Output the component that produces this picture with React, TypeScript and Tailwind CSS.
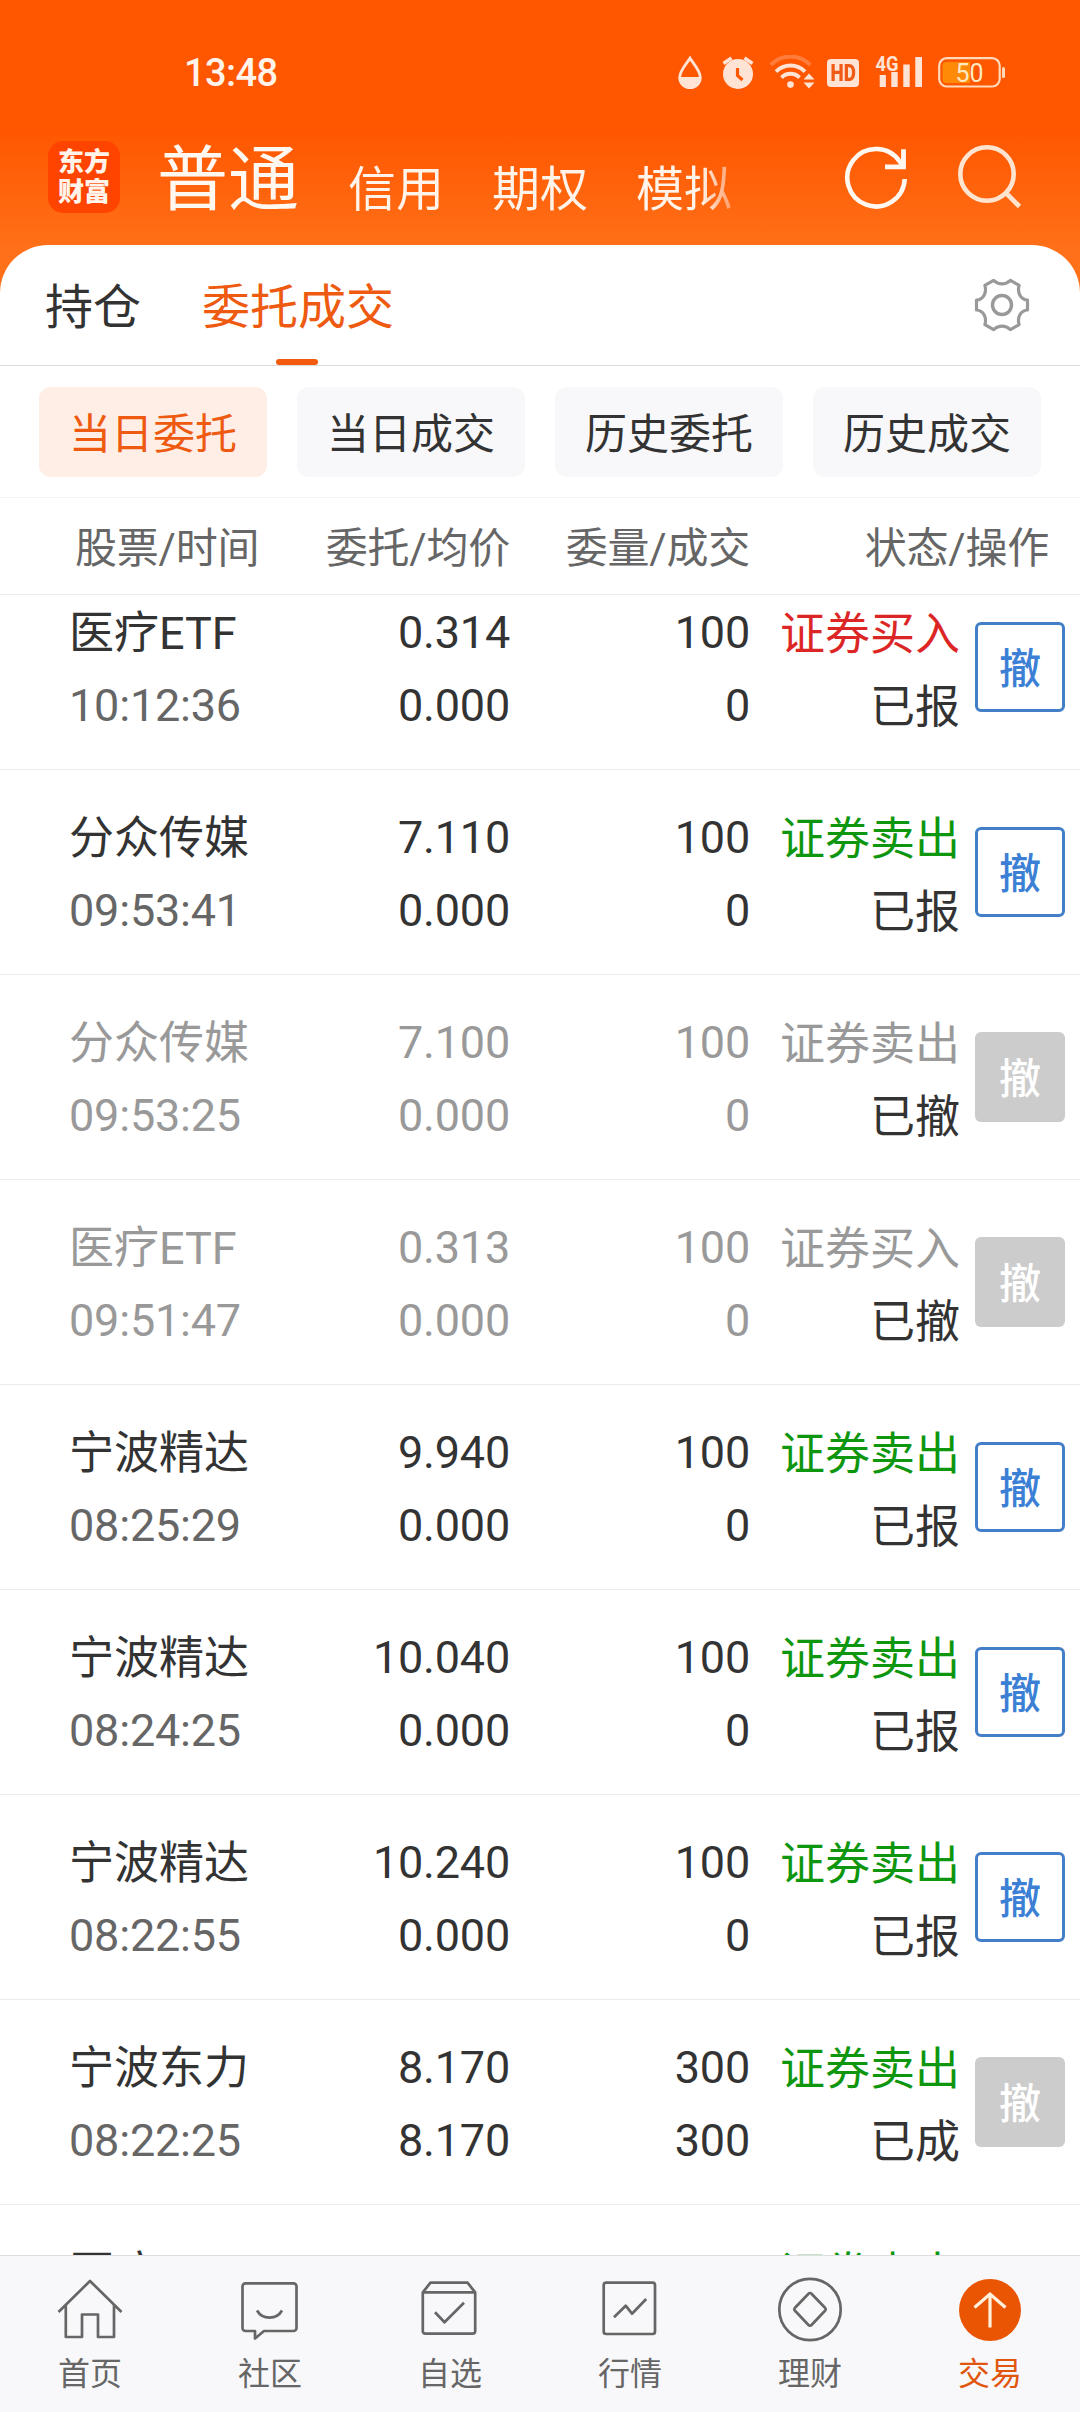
import type { ReactNode } from "react";

type Side = "buy" | "sell";
type Order = {
  name: string;
  time?: string;
  price?: string;
  avg?: string;
  qty?: string;
  filled?: string;
  side: Side;
  status?: string;
};

const orders: Order[] = [
  { name: "医疗ETF", time: "10:12:36", price: "0.314", avg: "0.000", qty: "100", filled: "0", side: "buy", status: "已报" },
  { name: "分众传媒", time: "09:53:41", price: "7.110", avg: "0.000", qty: "100", filled: "0", side: "sell", status: "已报" },
  { name: "分众传媒", time: "09:53:25", price: "7.100", avg: "0.000", qty: "100", filled: "0", side: "sell", status: "已撤" },
  { name: "医疗ETF", time: "09:51:47", price: "0.313", avg: "0.000", qty: "100", filled: "0", side: "buy", status: "已撤" },
  { name: "宁波精达", time: "08:25:29", price: "9.940", avg: "0.000", qty: "100", filled: "0", side: "sell", status: "已报" },
  { name: "宁波精达", time: "08:24:25", price: "10.040", avg: "0.000", qty: "100", filled: "0", side: "sell", status: "已报" },
  { name: "宁波精达", time: "08:22:55", price: "10.240", avg: "0.000", qty: "100", filled: "0", side: "sell", status: "已报" },
  { name: "宁波东力", time: "08:22:25", price: "8.170", avg: "8.170", qty: "300", filled: "300", side: "sell", status: "已成" },
  { name: "医疗", side: "sell" },
];

function StatusBar() {
  return (
    <div className="flex h-[132px] items-start pl-[184px] pr-[74px] pt-[55px]">
      <span className="mt-[-4px] text-[38px] leading-[44px] font-medium tracking-[-0.6px] text-[#fff3ea]">13:48</span>
      <div className="ml-auto flex items-start text-[#ffe4d6]">
        <svg width="24" height="34" viewBox="0 0 24 34" className="mt-px">
          <path d="M12 2.2C9.5 6.5 1.7 14.5 1.7 21.4a10.3 10.3 0 0 0 20.6 0C22.3 14.500 14.500 6.500 12 2.200Z" fill="none" stroke="currentColor" strokeWidth="2.8" />
          <path d="M1.500 21h21a10.500 11.500 0 0 1-21 0Z" fill="currentColor" />
        </svg>
        <svg width="32" height="34" viewBox="0 0 32 34" className="ml-[20px] mt-px">
          <circle cx="16" cy="18" r="15" fill="currentColor" />
          <path d="M1.500 7.500 9.500 2M30.500 7.500 22.500 2" stroke="currentColor" strokeWidth="3.400" />
          <path d="M15.500 12v7.500l5 4.500" fill="none" stroke="#ff5600" strokeWidth="3.200" />
        </svg>
        <svg width="46" height="36" viewBox="0 0 46 36" className="ml-[15px]">
          <g fill="none" stroke="currentColor" strokeWidth="3.900">
            <path d="M1.800 9.900a27.500 27.500 0 0 1 39.400 0" opacity="0.28" />
            <path d="M7 16.700a20.200 20.200 0 0 1 29 0" />
            <path d="M12.500 22.600a12.500 12.500 0 0 1 18 0" />
          </g>
          <circle cx="21.500" cy="29.600" r="3.300" fill="currentColor" />
          <path d="M34.500 24.500 40 18.500l5.500 6ZM34.500 27.500h11l-5.500 6Z" fill="currentColor" />
        </svg>
        <span className="ml-[12px] mt-[4px] flex h-[28px] w-[32px] items-center justify-center rounded-[4px] bg-[#ffe4d6]">
          <span className="scale-x-[0.78] text-[24px] leading-[28px] font-black text-[#f05a14]">HD</span>
        </span>
        <svg width="48" height="34" viewBox="0 0 48 34" className="ml-[16px]">
          <text x="0.500" y="16" fontFamily="Roboto, sans-serif" fontSize="21" fontWeight="700" textLength="23" lengthAdjust="spacingAndGlyphs" fill="currentColor">4G</text>
          <path d="M4.700 20h6.200v12H4.700ZM16.300 17h6.400v15h-6.400ZM28.300 9.500h6.400V32h-6.400ZM40.300 2H47v30h-6.700Z" fill="currentColor" />
        </svg>
        <svg width="68" height="34" viewBox="0 0 68 34" className="ml-[15px]">
          <rect x="1.200" y="3.200" width="60.500" height="28.300" rx="7.500" fill="none" stroke="#ffd9b8" strokeWidth="2.200" />
          <path d="M8.500 7H32v21H8.500a4 4 0 0 1-4-4V11a4 4 0 0 1 4-4Z" fill="#ff8a08" />
          <rect x="64" y="12" width="3" height="11" rx="1.500" fill="#ffd9b8" />
          <text x="17.500" y="26.500" fontFamily="Roboto, sans-serif" fontSize="25" textLength="28" lengthAdjust="spacingAndGlyphs" fill="#ffe9c4">50</text>
        </svg>
      </div>
    </div>
  );
}

function Header() {
  return (
    <div className="flex h-[113px] items-start pl-[48px]">
      <div className="mt-[9px] flex h-[72px] w-[72px] flex-col items-center justify-center rounded-[15px] bg-[#ff4400] text-[26px] leading-[30px] font-black text-[#fff3ea]">
        <span>东方</span>
        <span>财富</span>
      </div>
      <span className="ml-[37px] mt-[8px] w-[142px] text-[71px] leading-[80px] text-[#fff8f0]">普通</span>
      <div className="ml-[49px] mt-[28px] flex gap-[48px] bg-gradient-to-r from-[#fff3ea] from-[92%] to-[#ff9a66] bg-clip-text text-[48px] leading-[60px] text-transparent">
        <span>信用</span>
        <span>期权</span>
        <span>模拟</span>
      </div>
      <svg width="66" height="68" viewBox="0 0 66 68" className="ml-[111px] mt-[12px]" fill="none" stroke="#fff8f0" strokeWidth="4.600">
        <path d="M61.700 35a28.700 28.700 0 1 1-5-17.500L61 23.500" />
        <path d="M60.500 5.300v17.500H42" strokeWidth="4.800" />
      </svg>
      <svg width="66" height="68" viewBox="0 0 66 68" className="ml-[47px] mt-[12px]" fill="none" stroke="#ffe4d0" strokeWidth="4.600">
        <circle cx="31" cy="30" r="26.700" />
        <path d="m50 49 13.500 13.500" />
      </svg>
    </div>
  );
}

function Tabs() {
  return (
    <div className="flex h-[121px] items-start border-b border-[#dcdcdc] pl-[45px] pr-[48px] text-[48px] leading-[60px]">
      <span className="mt-[33px] text-[#333]">持仓</span>
      <div className="relative ml-[61px] h-[120px] pt-[33px] text-[#ee5a10]">
        委托成交
        <span className="absolute bottom-0 left-[74px] h-[6px] w-[42px] rounded-[3px] bg-[#f25b0c]" />
      </div>
      <svg width="60" height="60" viewBox="-30 -30 60 60" className="ml-auto mt-[30px]" fill="none" stroke="#999" strokeWidth="3.200" strokeLinejoin="round">
        <path d="M25.500-5V5C18.500 5.500 15 12.500 17.100 19.600L8.400 24.600C3.500 20-3.500 20-8.400 24.600L-17.100 19.600C-15 12.500-18.500 5.500-25.500 5V-5C-18.500-5.500-15-12.500-17.100-19.600L-8.400-24.600C-3.500-20 3.500-20 8.400-24.600L17.100-19.600C15-12.500 18.500-5.500 25.500-5Z" />
        <circle r="9.500" strokeWidth="3.400" />
      </svg>
    </div>
  );
}

function Chips() {
  const base = "flex h-[90px] w-[228px] items-center justify-center rounded-[12px] pt-[5px] text-[42px] leading-[60px]";
  return (
    <div className="flex h-[132px] gap-[30px] border-b border-[#f5f5f5] pl-[39px] pt-[21px]">
      <div className={base + " bg-[#ffeee6] text-[#ee5a10]"}>当日委托</div>
      {["当日成交", "历史委托", "历史成交"].map((label) => (
        <div key={label} className={base + " bg-[#f8f8fa] text-[#333]"}>{label}</div>
      ))}
    </div>
  );
}

function OrderRow({ order }: { order: Order }) {
  const cancelled = order.status === "已撤";
  const active = order.status === "已报";
  const main = cancelled ? "text-[#999]" : "text-[#333]";
  const sub = cancelled ? "text-[#999]" : "text-[#666]";
  const sideColor = cancelled ? "text-[#999]" : order.side === "buy" ? "text-[#dc2626]" : "text-[#0f960f]";
  return (
    <div className="grid h-[205px] shrink-0 grid-cols-[300px_210px_240px_210px_120px] border-b border-[#ebebeb] pt-[31px] text-[45px] leading-[73px] whitespace-nowrap">
      <div className="flex flex-col pl-[69px]">
        <span className={"-mb-px pt-px " + main}>{order.name}</span>
        <span className={"tracking-[-0.2px] " + sub}>{order.time}</span>
      </div>
      <div className={"flex flex-col text-right tracking-[-0.2px] " + main}>
        <span>{order.price}</span>
        <span>{order.avg}</span>
      </div>
      <div className={"flex flex-col text-right tracking-[-0.2px] " + main}>
        <span>{order.qty}</span>
        <span>{order.filled}</span>
      </div>
      <div className="flex flex-col pt-[2px] text-right">
        <span className={sideColor}>{order.side === "buy" ? "证券买入" : "证券卖出"}</span>
        <span className="text-[#333]">{order.status}</span>
      </div>
      {order.status && (
        <div className="pl-[15px] pt-[26px]">
          <button
            className={
              "flex h-[90px] w-[90px] items-center justify-center rounded-[6px] pt-[5px] text-[42px] leading-[60px] font-medium " +
              (active ? "border-3 border-[#437fc8] bg-white text-[#3b80d4]" : "bg-[#ccc] text-white")
            }
          >
            撤
          </button>
        </div>
      )}
    </div>
  );
}

function NavItem({ label, active, children }: { label: string; active?: boolean; children: ReactNode }) {
  return (
    <div className={"flex w-[180px] flex-col items-center pt-[19px] text-[32px] leading-[44px] " + (active ? "text-[#e0560c]" : "text-[#666]")}>
      <svg width="66" height="68" viewBox="0 0 66 68" fill="none" stroke="currentColor" strokeWidth="2.700" strokeLinejoin="round">
        {children}
      </svg>
      <span className="mt-[9px]">{label}</span>
    </div>
  );
}

function BottomNav() {
  return (
    <nav className="flex h-[157px] border-t border-[#dedee0] bg-[#f8f8fa]">
      <NavItem label="首页">
        <path d="M1.500 37 33 6l31.500 31M8.800 30.500V62H25V39.500H41V62H57V30.500" />
      </NavItem>
      <NavItem label="社区">
        <path d="M8.500 8.300h48a3 3 0 0 1 3 3V53a3 3 0 0 1-3 3H27l-9 7.500V56H8.500a3 3 0 0 1-3-3V11.300a3 3 0 0 1 3-3Z" />
        <path d="M20 35.500c5.500 9.500 19.500 9.500 25 0" />
      </NavItem>
      <NavItem label="自选">
        <path d="M5.800 17.300 13.500 7.700h37l7.700 9.600V56.200a2.500 2.500 0 0 1-2.500 2.500H8.300a2.500 2.500 0 0 1-2.500-2.500ZM5.800 17.300h52.400M18 37.300l9.500 10L47 27.700" />
      </NavItem>
      <NavItem label="行情">
        <rect x="6.700" y="7.700" width="51.300" height="51.300" rx="2.500" />
        <path d="m17 42.300 11.700-11.600 6.300 8L49.200 24" />
      </NavItem>
      <NavItem label="理财">
        <circle cx="33" cy="34.500" r="30.700" />
        <path d="M31.500 18.700a2 2 0 0 1 3 0L48 32.800a2 2 0 0 1 0 3L34.500 50a2 2 0 0 1-3 0L18 35.800a2 2 0 0 1 0-3Z" />
      </NavItem>
      <NavItem label="交易" active>
        <circle cx="33" cy="35" r="31" fill="#ea5504" stroke="none" />
        <path d="M33 52.500V19M17.500 32.500 33 19l15.500 13.500" stroke="#fff0dc" strokeWidth="3.200" strokeLinejoin="miter" />
      </NavItem>
    </nav>
  );
}

export default function App() {
  return (
    <div className="flex h-[2412px] w-[1080px] flex-col overflow-hidden bg-white font-['Roboto','Noto_Sans_CJK_SC',sans-serif]">
      <div className="bg-[linear-gradient(to_bottom,#ff5600_0px,#ff5600_126px,#ff7018_250px)]">
        <StatusBar />
        <Header />
        <div className="rounded-t-[48px] bg-white">
          <Tabs />
        </div>
      </div>
      <Chips />
      <div className="flex h-[97px] items-center border-b border-[#ebebeb] pt-[5px] text-[42px] leading-[60px] tracking-[-0.2px] whitespace-nowrap text-[#666]">
        <span className="w-[300px] pl-[75px]">股票/时间</span>
        <span className="w-[210px] text-right">委托/均价</span>
        <span className="w-[240px] text-right">委量/成交</span>
        <span className="w-[299px] text-right">状态/操作</span>
      </div>
      <div className="min-h-0 flex-1 overflow-hidden">
        <div className="-mt-[30px] flex flex-col">
          {orders.map((order, i) => (
            <OrderRow key={i} order={order} />
          ))}
        </div>
      </div>
      <BottomNav />
    </div>
  );
}
